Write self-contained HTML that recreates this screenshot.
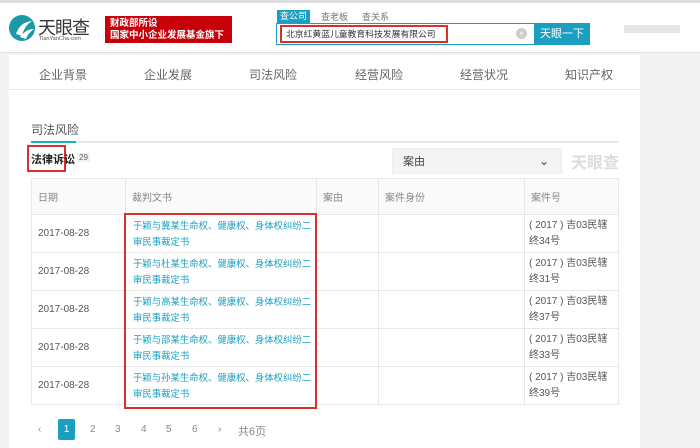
<!DOCTYPE html><html><head><meta charset="utf-8"><style>
*{margin:0;padding:0;box-sizing:border-box}
body{width:700px;height:448px;overflow:hidden;background:#f3f3f3;font-family:"Liberation Sans","Noto Sans CJK SC",sans-serif;position:relative;color:#555}
.a{position:absolute}
td{border:1px solid #e8e8e8;font-size:10px;color:#555;padding:0 6px;vertical-align:middle}
td.l{color:#1a9fc0;line-height:16px;font-size:9.4px;padding:0 0 0 7px;white-space:nowrap}
td.n{line-height:16px;font-size:10px;padding:0 4px;white-space:nowrap}
</style></head><body>
<div class="a" style="left:0;top:0;width:700px;height:3px;background:#ddd"></div>
<div class="a" style="left:0;top:3px;width:700px;height:50px;background:#fff;border-bottom:1px solid #e2e2e2"></div>
<svg class="a" style="left:8px;top:14px" width="28" height="28" viewBox="0 0 28 28"><circle cx="14" cy="14" r="13" fill="#1a9aa8"/><path d="M8 20 Q12 8 24 7 Q16 12 14 22 Z" fill="#fff"/><path d="M12 23 Q18 15 26 15 Q20 19 18 25Z" fill="#fff"/></svg>
<div class="a" style="left:38px;top:14px;font-size:18px;color:#333;letter-spacing:-1px">天眼查</div>
<div class="a" style="left:39px;top:36px;font-size:5.5px;color:#555">TianYanCha.com</div>
<div class="a" style="left:105px;top:16px;width:127px;height:27px;background:#c8000a;color:#fff;font-size:9.5px;font-weight:bold;line-height:12px;padding:2px 5px">财政部所设<br>国家中小企业发展基金旗下</div>
<div class="a" style="left:277px;top:10px;width:33px;height:13px;background:#1a9fc0;color:#fff;font-size:9px;text-align:center;line-height:13px">查公司</div>
<div class="a" style="left:321px;top:10px;font-size:9px;color:#777">查老板</div>
<div class="a" style="left:362px;top:10px;font-size:9px;color:#777">查关系</div>
<div class="a" style="left:276px;top:23px;width:314px;height:22px;border:1px solid #1a9fc0;background:#fff"></div>
<div class="a" style="left:280px;top:25px;width:168px;height:18px;border:2px solid #d9302c;font-size:8.8px;color:#333;line-height:14px;padding-left:4px;white-space:nowrap;overflow:hidden">北京红黄蓝儿童教育科技发展有限公司</div>
<div class="a" style="left:516px;top:28px;width:11px;height:11px;border-radius:50%;background:#ccc;color:#fff;font-size:8px;text-align:center;line-height:11px">×</div>
<div class="a" style="left:534px;top:23px;width:56px;height:22px;background:#1a9fc0;color:#fff;font-size:11px;text-align:center;line-height:22px">天眼一下</div>
<div class="a" style="left:624px;top:25px;width:56px;height:8px;background:#e5e5e5"></div>
<div class="a" style="left:9px;top:55px;width:631px;height:393px;background:#fff"></div>
<div class="a" style="left:9px;top:89px;width:631px;height:1px;background:#eaeaea"></div>
<div class="a" style="top:66px;left:0;width:640px;font-size:12px;color:#666">
<span class="a" style="left:39px">企业背景</span><span class="a" style="left:144px">企业发展</span><span class="a" style="left:249px">司法风险</span><span class="a" style="left:355px">经营风险</span><span class="a" style="left:460px">经营状况</span><span class="a" style="left:565px">知识产权</span></div>
<div class="a" style="left:31px;top:121px;font-size:12px;color:#555">司法风险</div>
<div class="a" style="left:31px;top:141px;width:587px;height:2px;background:#e6e6e6"></div>
<div class="a" style="left:31px;top:141px;width:45px;height:2px;background:#1ab0c0"></div>
<div class="a" style="left:27px;top:145px;width:39px;height:27px;border:2px solid #d9302c"></div>
<div class="a" style="left:31px;top:151px;font-size:11px;font-weight:bold;color:#222">法律诉讼</div>
<div class="a" style="left:77px;top:153px;font-size:8px;color:#666;background:#eef2f8;padding:0 2px">29</div>
<div class="a" style="left:392px;top:148px;width:170px;height:26px;background:#f4f4f4;border:1px solid #eee;font-size:11px;color:#444;line-height:26px;padding-left:10px">案由<span style="position:absolute;right:12px;top:-1px;font-size:12px">&#8964;</span></div>
<div class="a" style="left:571px;top:149px;font-size:16px;color:#ddd;font-weight:bold">天眼查</div>
<table class="a" style="left:31px;top:178px;width:587px;border-collapse:collapse;table-layout:fixed">
<colgroup><col style="width:94px"><col style="width:191px"><col style="width:62px"><col style="width:146px"><col style="width:94px"></colgroup>
<tr style="height:36px;background:#fafafa"><td style="color:#888">日期</td><td style="color:#888">裁判文书</td><td style="color:#888">案由</td><td style="color:#888">案件身份</td><td style="color:#888">案件号</td></tr>
<tr style="height:38px"><td>2017-08-28</td><td class="l">于颖与冀某生命权、健康权、身体权纠纷二<br>审民事裁定书</td><td></td><td></td><td class="n">( 2017 ) 吉03民辖<br>终34号</td></tr>
<tr style="height:38px"><td>2017-08-28</td><td class="l">于颖与杜某生命权、健康权、身体权纠纷二<br>审民事裁定书</td><td></td><td></td><td class="n">( 2017 ) 吉03民辖<br>终31号</td></tr>
<tr style="height:38px"><td>2017-08-28</td><td class="l">于颖与高某生命权、健康权、身体权纠纷二<br>审民事裁定书</td><td></td><td></td><td class="n">( 2017 ) 吉03民辖<br>终37号</td></tr>
<tr style="height:38px"><td>2017-08-28</td><td class="l">于颖与邵某生命权、健康权、身体权纠纷二<br>审民事裁定书</td><td></td><td></td><td class="n">( 2017 ) 吉03民辖<br>终33号</td></tr>
<tr style="height:38px"><td>2017-08-28</td><td class="l">于颖与孙某生命权、健康权、身体权纠纷二<br>审民事裁定书</td><td></td><td></td><td class="n">( 2017 ) 吉03民辖<br>终39号</td></tr>
</table>
<div class="a" style="left:124px;top:213px;width:193px;height:196px;border:2px solid #d9302c"></div>
<div class="a" style="left:58px;top:419px;width:17px;height:21px;background:#1a9fc0;border-radius:2px;color:#fff;font-size:10px;text-align:center;line-height:21px">1</div>
<div class="a" style="top:424px;left:0;font-size:10px;color:#888">
<span class="a" style="left:38px">‹</span><span class="a" style="left:90px">2</span><span class="a" style="left:115px">3</span><span class="a" style="left:141px">4</span><span class="a" style="left:166px">5</span><span class="a" style="left:192px">6</span><span class="a" style="left:218px">›</span><span class="a" style="left:238px;font-size:11px;top:-1px;white-space:nowrap">共6页</span></div>
</body></html>
